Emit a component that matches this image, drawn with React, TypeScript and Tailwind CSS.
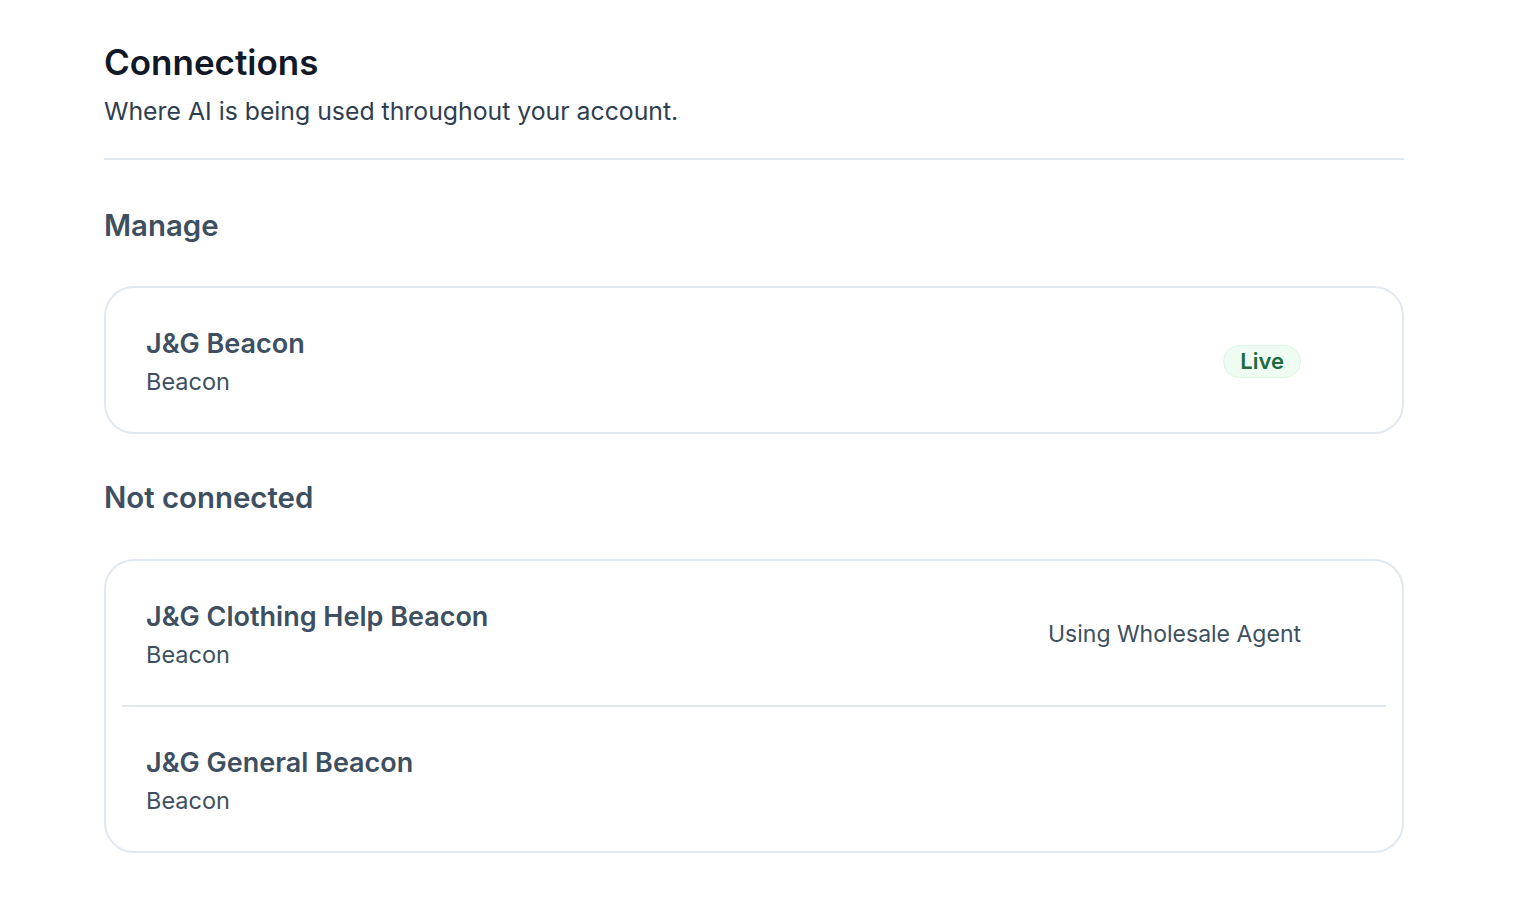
const rows = {
  manage: [{ name: "J&G Beacon", kind: "Beacon", status: "live" as const }],
  notConnected: [
    { name: "J&G Clothing Help Beacon", kind: "Beacon", status: "Using Wholesale Agent" },
    { name: "J&G General Beacon", kind: "Beacon", status: "" },
  ],
};

function LiveBadge() {
  return (
    <span className="inline-flex h-[33px] items-center rounded-full border-[1.5px] border-[#d9f7df] bg-[#effcf1] px-[16px] text-[22px] font-semibold text-[#1d6b3e]">
      Live
    </span>
  );
}

function Row({ name, kind, status }: { name: string; kind: string; status: string }) {
  return (
    <div className="flex items-center px-6 pt-[36px] pb-[31px]">
      <div className="flex-1">
        <div className="text-[27px] leading-[39px] font-semibold text-[#3d4f60]">{name}</div>
        <div className="text-[23.5px] leading-[38px] text-[#3d4f60]">{kind}</div>
      </div>
      <div className="mb-[3px] flex w-[300px] justify-end">
        {status === "live" ? (
          <LiveBadge />
        ) : (
          <span className="text-[23px] text-[#3d4f60]">{status}</span>
        )}
      </div>
      <div className="w-[61px]" />
    </div>
  );
}

function Card({ items }: { items: { name: string; kind: string; status: string }[] }) {
  return (
    <div className="rounded-[30px] border-2 border-[#e2e8f0] bg-white px-4">
      {items.map((r, i) => (
        <div key={r.name} className={i > 0 ? "border-t-2 border-[#e2e8f0]" : ""}>
          <Row {...r} />
        </div>
      ))}
    </div>
  );
}

export default function App() {
  return (
    <div className="min-h-screen bg-white px-[104px] pt-[40px] font-['Inter',sans-serif]" style={{ width: 1516 }}>
      <div className="w-[1300px]">
        <h1 className="text-[35px] leading-[44px] font-semibold text-[#111827]">Connections</h1>
        <p className="mt-[9px] text-[24.8px] leading-[36px] text-[#2f3e4f]">
          Where AI is being used throughout your account.
        </p>
        <div className="mt-[29px] h-[2px] bg-[#e2e8f0]" />

        <h2 className="mt-[48px] text-[29.4px] leading-[36px] font-semibold text-[#3d4f60]">Manage</h2>
        <div className="mt-[42px]">
          <Card items={rows.manage} />
        </div>

        <h2 className="mt-[46px] text-[29.4px] leading-[36px] font-semibold text-[#3d4f60]">Not connected</h2>
        <div className="mt-[43px]">
          <Card items={rows.notConnected} />
        </div>
      </div>
    </div>
  );
}
